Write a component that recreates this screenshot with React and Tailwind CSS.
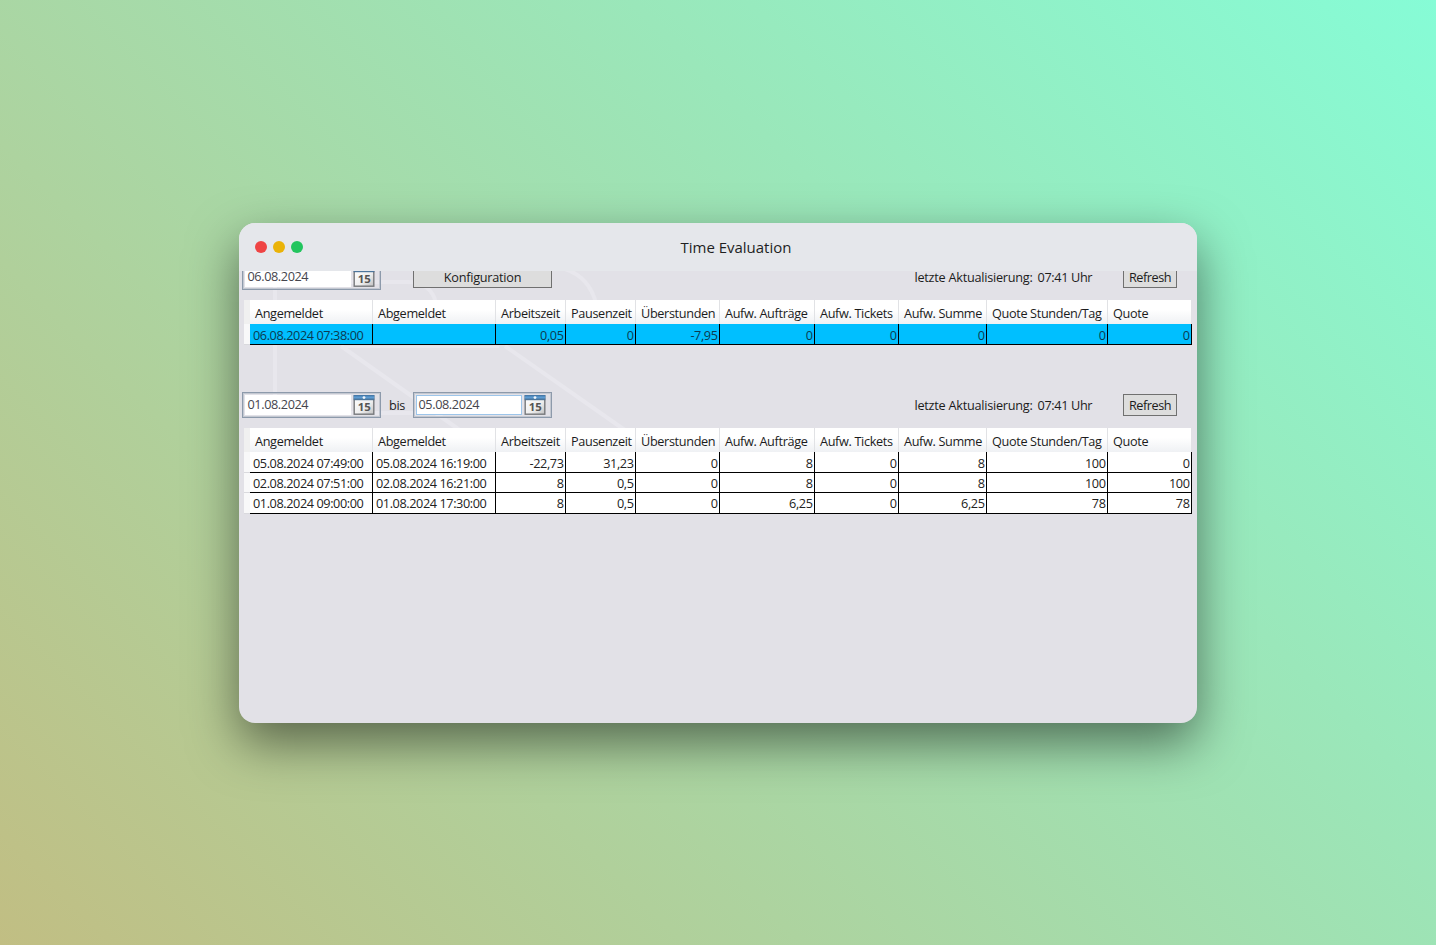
const COLS = [
  ["Angemeldet", "w-[123px]"],
  ["Abgemeldet", "w-[123px]"],
  ["Arbeitszeit", "w-[70px]"],
  ["Pausenzeit", "w-[70px]"],
  ["Überstunden", "w-[84px]"],
  ["Aufw. Aufträge", "w-[95px]"],
  ["Aufw. Tickets", "w-[84px]"],
  ["Aufw. Summe", "w-[88px]"],
  ["Quote Stunden/Tag", "w-[121px]"],
  ["Quote", "w-[84px]"],
];

function CalendarIcon() {
  return (
    <svg width="22" height="21" viewBox="0 0 22 21" className="shrink-0">
      <defs>
        <linearGradient id="page" x1="0" y1="0" x2="1" y2="1">
          <stop offset="0" stopColor="#ffffff" />
          <stop offset="0.6" stopColor="#eeeeee" />
          <stop offset="1" stopColor="#c0c0c0" />
        </linearGradient>
        <linearGradient id="top" x1="0" y1="0" x2="0" y2="1">
          <stop offset="0" stopColor="#3f6f9c" />
          <stop offset="0.45" stopColor="#5f9fd6" />
          <stop offset="1" stopColor="#46698a" />
        </linearGradient>
      </defs>
      <rect x="1.2" y="1" width="19.6" height="18.2" fill="url(#page)" stroke="#77797c" strokeWidth="1.4" />
      <rect x="0.6" y="0" width="20.8" height="5.2" fill="url(#top)" />
      <circle cx="11" cy="2.6" r="1.4" fill="#f2f6fa" />
      <text x="11.2" y="16.2" textAnchor="middle" fontSize="10" fontWeight="700" fill="#555555" className="font-['Open_Sans',sans-serif]" textLength="13" lengthAdjust="spacingAndGlyphs">15</text>
    </svg>
  );
}

function DateBox({ value, focused }) {
  return (
    <div className="flex h-[26px] w-[139px] items-center border border-[#8d9aab] pl-[2px] shadow-[inset_0_0_0_1px_#c3c8d1]">
      <div className={"flex h-[20px] w-[106px] items-center border bg-white pb-px pl-[1.5px] text-[#45454d] tracking-[-0.4px] " + (focused ? "border-[#9cc5ea]" : "border-white")}>
        {value}
      </div>
      <div className="ml-[2px] mt-[1px]"><CalendarIcon /></div>
    </div>
  );
}

function Button({ label, wide }) {
  return (
    <div className={"flex h-[22px] shrink-0 items-center justify-center border border-[#707070] bg-[#dddddd] pt-px " + (wide ? "w-[139px] tracking-[-0.25px]" : "w-[54px] tracking-[-0.45px]")}>
      {label}
    </div>
  );
}

function Grid({ rows, selected }) {
  return (
    <div className="ml-[5px] w-[948px]">
      <div className="flex h-[24px] bg-linear-to-b from-white from-40% to-[#eff1f4]">
        <div className="w-[6px] shrink-0 bg-[#f0f0f0]" />
        {COLS.map(([name, w]) => (
          <div key={name} className={"flex shrink-0 items-center border-r border-[#e1e2e5] pl-[5px] pt-[2.5px] whitespace-nowrap tracking-[-0.35px] " + w}>
            {name}
          </div>
        ))}
      </div>
      {rows.map((row, r) => (
        <div key={r} className={"flex " + (r === 1 ? "h-[20px]" : "h-[21px]")}>
          <div className="w-[6px] shrink-0 border-b border-[#d9d9dd] bg-[#f8f8f9]" />
          {row.map((cell, c) => (
            <div key={c} className={"flex shrink-0 items-center border-r border-b border-black whitespace-nowrap tracking-[-0.41px] " + COLS[c][1] + (r === 2 ? " pt-0" : " pt-[2px]") + (c < 2 ? " pl-[3px]" : " justify-end pr-[1.5px]") + (selected ? " bg-[#00bfff] text-[#0c3a50]" : " bg-white text-[#222222]")}>
              {cell}
            </div>
          ))}
        </div>
      ))}
    </div>
  );
}

function Updated() {
  return (
    <div className="ml-auto flex items-center">
      <span className="w-[123px] pt-px pl-[0.5px] tracking-[-0.25px]">letzte Aktualisierung:</span>
      <span className="w-[86px] pt-px pl-[0.5px] tracking-[-0.36px]">07:41 Uhr</span>
      <Button label="Refresh" />
    </div>
  );
}

export default function App() {
  return (
    <div className="flex h-[945px] w-full items-start justify-center bg-[linear-gradient(45deg,#c1be83,#86fcd6)] pt-[223px]">
      <div className="flex h-[500px] w-[958px] flex-col overflow-hidden rounded-2xl bg-[#e2e1e7] shadow-[0_20px_50px_rgba(0,0,0,0.5)]">
        <div className="flex h-12 shrink-0 items-center bg-[#e5e7eb] pl-4">
          <div className="flex gap-1.5">
            <span className="size-3 rounded-full bg-[#ef4444]" />
            <span className="size-3 rounded-full bg-[#eab308]" />
            <span className="size-3 rounded-full bg-[#22c55e]" />
          </div>
          <div className="flex-1 pt-px pr-[28px] text-center font-['Open_Sans',sans-serif] text-[15px] font-normal tracking-[-0.02px] text-[#1f1f1f]">
            Time Evaluation
          </div>
        </div>
        <div className="relative flex-1 overflow-hidden font-['Open_Sans',sans-serif] text-[12.7px] leading-none text-[#1c1c1c]">
          <svg className="absolute top-0 left-0" width="480" height="200" fill="none" stroke="#e8e7ed" strokeWidth="4">
            <path d="M36 0V142H200" />
            <path d="M36 11H168Q192 11 197 32" />
            <path d="M326 -2Q350 6 357 32" />
            <path d="M102 75L222 160M266 75L390 162" />
            <path d="M102 76H260" strokeWidth="2" />
          </svg>
          <div className="relative flex flex-col">
            <div className="mt-[-9px] flex h-[30px] items-center pr-[20px] pl-[3px]">
              <div className="mt-[-1px]"><DateBox value="06.08.2024" /></div>
              <div className="ml-[32px]"><Button label="Konfiguration" wide /></div>
              <Updated />
            </div>
            <div className="mt-[8px]">
              <Grid selected rows={[["06.08.2024 07:38:00", "", "0,05", "0", "-7,95", "0", "0", "0", "0", "0"]]} />
            </div>
            <div className="mt-[45px] flex h-[30px] items-center pr-[20px] pl-[3px]">
              <DateBox value="01.08.2024" />
              <span className="w-[32px] pt-px text-center tracking-[-0.3px]">bis</span>
              <DateBox value="05.08.2024" focused />
              <Updated />
            </div>
            <div className="mt-[8px]">
              <Grid
                rows={[
                  ["05.08.2024 07:49:00", "05.08.2024 16:19:00", "-22,73", "31,23", "0", "8", "0", "8", "100", "0"],
                  ["02.08.2024 07:51:00", "02.08.2024 16:21:00", "8", "0,5", "0", "8", "0", "8", "100", "100"],
                  ["01.08.2024 09:00:00", "01.08.2024 17:30:00", "8", "0,5", "0", "6,25", "0", "6,25", "78", "78"],
                ]}
              />
            </div>
          </div>
        </div>
      </div>
    </div>
  );
}
